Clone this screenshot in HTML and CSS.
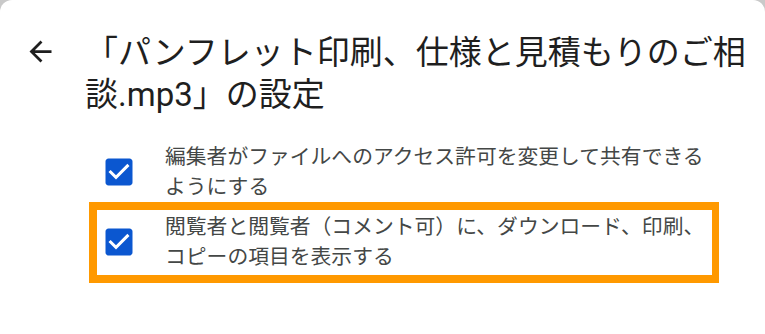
FILE: index.html
```html
<!DOCTYPE html>
<html lang="ja">
<head>
<meta charset="utf-8">
<link rel="stylesheet" href="styles.css">
</head>
<body>
<div class="dialog">
  <header class="header">
    <svg class="back" viewBox="0 0 24 24" aria-hidden="true"><path d="M20 11H7.83l5.59-5.59L12 4l-8 8 8 8 1.41-1.41L7.83 13H20v-2z"/></svg>
    <h1 class="title">「パンフレット印刷、仕様と見積もりのご相談.mp3」の設定</h1>
  </header>
  <div class="options">
    <div class="row">
      <svg class="check" viewBox="0 0 24 24" aria-hidden="true"><path d="M19 3H5c-1.11 0-2 .9-2 2v14c0 1.1.89 2 2 2h14c1.11 0 2-.9 2-2V5c0-1.1-.89-2-2-2zm-9 14l-5-5 1.41-1.41L10 14.17l7.59-7.59L19 8l-9 9z"/></svg>
      <p class="label">編集者がファイルへのアクセス許可を変更して共有できるようにする</p>
    </div>
    <div class="row row-highlight">
      <svg class="check" viewBox="0 0 24 24" aria-hidden="true"><path d="M19 3H5c-1.11 0-2 .9-2 2v14c0 1.1.89 2 2 2h14c1.11 0 2-.9 2-2V5c0-1.1-.89-2-2-2zm-9 14l-5-5 1.41-1.41L10 14.17l7.59-7.59L19 8l-9 9z"/></svg>
      <p class="label">閲覧者と閲覧者（コメント可）に、ダウンロード、印刷、コピーの項目を表示する</p>
    </div>
  </div>
</div>
</body>
</html>
```

FILE: styles.css
```css
html, body {
  margin: 0;
  padding: 0;
  background: #c9c9c9;
}
.dialog {
  width: 765px;
  height: 334px;
  background: #ffffff;
  border-radius: 12px 12px 0 0;
  font-family: "Roboto", "Noto Sans CJK JP", sans-serif;
  overflow: hidden;
}
.header {
  display: flex;
  align-items: flex-start;
  padding: 35px 10px 0 24px;
}
.back {
  flex: none;
  width: 33px;
  height: 33px;
  fill: #1f1f1f;
}
.title {
  margin: -3px 0 0 28px;
  font-size: 33px;
  line-height: 42px;
  font-weight: 400;
  color: #1f1f1f;
}
.options {
  margin: 26px 0 0 89px;
  width: 630px;
}
.row {
  display: flex;
  align-items: center;
  padding: 0 8px 0 12px;
}
.row-highlight {
  border: 8px solid #ff9900;
  border-right-width: 7px;
  padding: 2px 0 3px 4px;
}
.check {
  flex: none;
  width: 36px;
  height: 36px;
  fill: #0b57d0;
}
.label {
  margin: 0 0 0 28px;
  font-size: 20.8px;
  line-height: 30px;
  color: #444746;
}
```
